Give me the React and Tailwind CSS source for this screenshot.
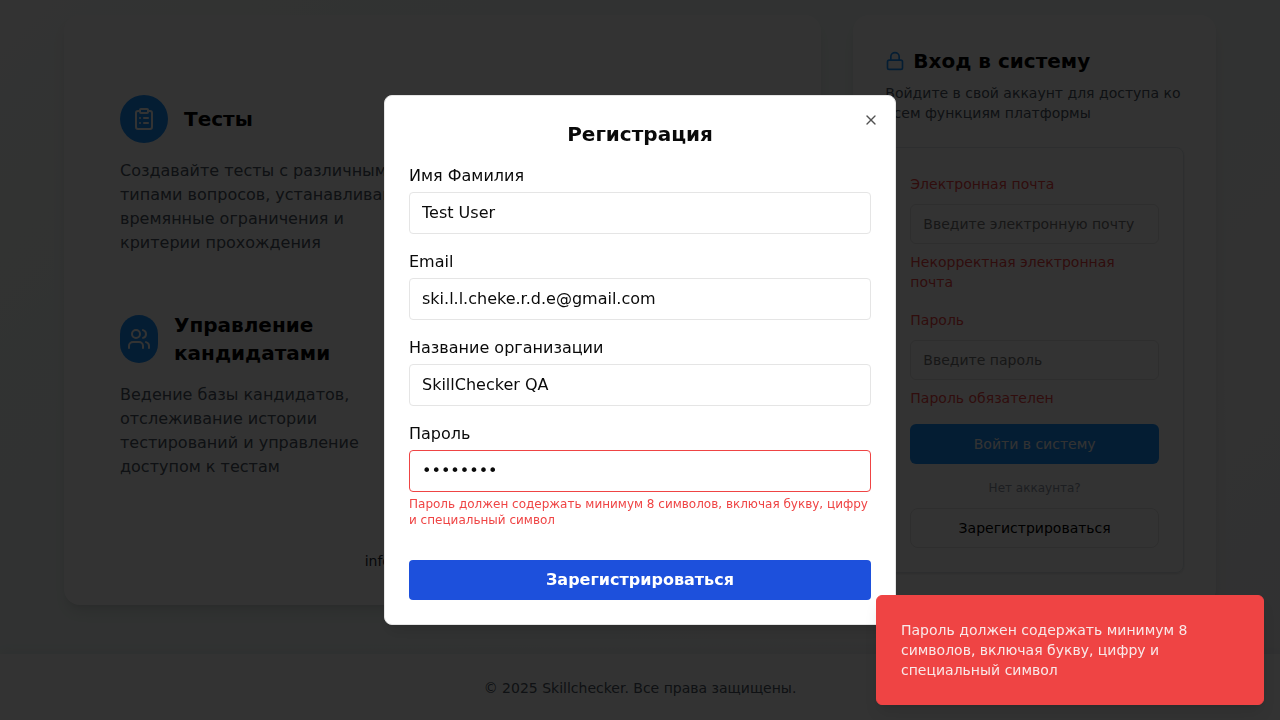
import { ClipboardList, Users, Lock, X } from "lucide-react";

function Feature({ icon: Icon, iconClass, title, children }) {
  return (
    <div className="w-[296px]">
      <div className="flex items-center gap-4">
        <div className={`flex h-12 shrink-0 items-center justify-center rounded-full bg-[#1890ff] text-white ${iconClass}`}>
          <Icon className="size-6" />
        </div>
        <h3 className="text-xl font-bold text-black">{title}</h3>
      </div>
      <p className="mt-4 text-base text-[#4b5563]">{children}</p>
    </div>
  );
}

function LoginField({ label, placeholder, error }) {
  return (
    <div className="flex flex-col text-sm">
      <label className="text-[#ef4444]">{label}</label>
      <input
        placeholder={placeholder}
        className="mt-2.5 h-10 rounded-md border border-neutral-200 px-3 placeholder:text-neutral-500"
      />
      <p className="mt-2 text-[#ef4444]">{error}</p>
    </div>
  );
}

function ModalField({ label, value, type = "text", error }) {
  return (
    <div className="flex flex-col">
      <label>{label}</label>
      <input
        type={type}
        defaultValue={value}
        className={`mt-1 h-[42px] rounded border px-3 pb-0.5 ${error ? "border-[#ef4444]" : "border-neutral-200"}`}
      />
      {error && <p className="mt-1 text-xs text-[#ef4444]">{error}</p>}
    </div>
  );
}

export default function App() {
  return (
    <div className="h-[720px] w-[1280px] overflow-hidden font-['DejaVu_Sans',sans-serif] text-neutral-950">
      <div className="flex h-[720px] flex-col bg-[linear-gradient(135deg,#fdfdfd_0%,#f3fbf8_25%,#f3faf8_50%,#f8f8f8_80%,#f3f4f6_100%)]">
        <main className="grid h-[654px] shrink-0 grid-cols-3 gap-8 px-16 pt-[15px] pb-[49px]">
          <section className="col-span-2 flex flex-col rounded-2xl bg-white px-14 pt-20 shadow-lg">
            <Feature icon={ClipboardList} iconClass="w-12" title="Тесты">
              Создавайте тесты с различными типами вопросов, устанавливайте времянные ограничения и критерии прохождения
            </Feature>
            <div className="mt-14">
              <Feature icon={Users} iconClass="w-[38px]" title="Управление кандидатами">
                Ведение базы кандидатов, отслеживание истории тестирований и управление доступом к тестам
              </Feature>
            </div>
            <p className="mx-auto mt-[72px] w-[156px] text-sm whitespace-nowrap text-[#1f2937]">info@skillchecker.ru</p>
          </section>

          <section className="rounded-2xl bg-white p-8 shadow-lg">
            <div className="flex items-center gap-2">
              <Lock className="size-5 text-[#1890ff]" />
              <h2 className="text-xl font-bold text-black">Вход в систему</h2>
            </div>
            <p className="mt-2 text-sm text-[#4b5563]">Войдите в свой аккаунт для доступа ко всем функциям платформы</p>
            <div className="mt-6 rounded-lg border border-[#dfe6ec] px-6 pt-[26px] pb-6 shadow-sm">
              <div className="flex flex-col gap-[18px]">
                <LoginField label="Электронная почта" placeholder="Введите электронную почту" error="Некорректная электронная почта" />
                <LoginField label="Пароль" placeholder="Введите пароль" error="Пароль обязателен" />
              </div>
              <button className="mt-4 h-10 w-full rounded-md bg-[#1890ff] text-sm text-white">Войти в систему</button>
              <p className="my-4 h-3 text-center text-xs leading-4 text-[#8e95a3]">
                Нет аккаунта?
              </p>
              <button className="h-10 w-full rounded-lg border border-neutral-200 text-sm text-black">Зарегистрироваться</button>
            </div>
          </section>
        </main>
        <footer className="h-[68px] shrink-0 bg-white pt-6 text-center text-sm text-[#4b5563] shadow-[0_-2px_12px_rgba(80,90,160,0.08)]">
          © 2025 Skillchecker. Все права защищены.
        </footer>
      </div>

      <div className="fixed inset-0 flex items-center justify-center bg-black/80">
        <div className="relative flex w-[512px] flex-col gap-4 rounded-lg border border-neutral-200 bg-white p-6 shadow-lg">
          <h2 className="text-center text-xl font-bold">Регистрация</h2>
          <ModalField label="Имя Фамилия" value="Test User" />
          <ModalField label="Email" value="ski.l.l.cheke.r.d.e@gmail.com" />
          <ModalField label="Название организации" value="SkillChecker QA" />
          <ModalField
            label="Пароль"
            value="Password"
            type="password"
            error="Пароль должен содержать минимум 8 символов, включая букву, цифру и специальный символ"
          />
          <button className="mt-4 h-10 rounded bg-[#1d50dc] font-bold text-white">Зарегистрироваться</button>
          <button className="absolute top-4 right-4 opacity-70" aria-label="Закрыть">
            <X className="size-4" />
          </button>
        </div>
      </div>

      <div className="fixed right-4 bottom-[15px] w-[388px] rounded-md border border-[#ef4444] bg-[#ef4444] p-6 shadow-lg">
        <p className="w-[300px] text-sm text-neutral-50 opacity-90">
          Пароль должен содержать минимум 8 символов, включая букву, цифру и специальный символ
        </p>
      </div>
    </div>
  );
}
